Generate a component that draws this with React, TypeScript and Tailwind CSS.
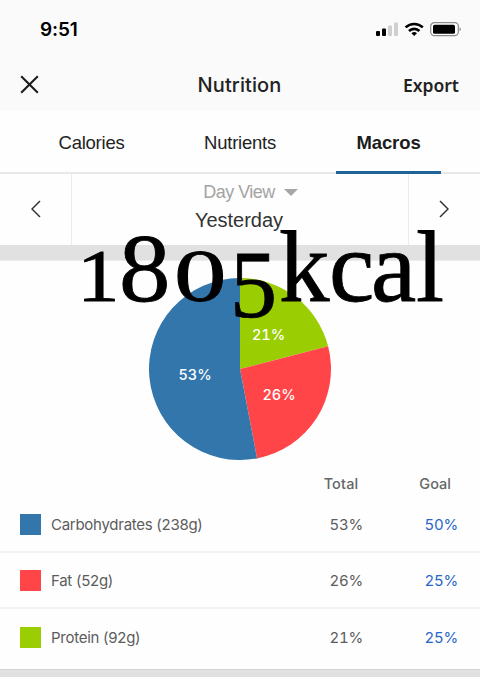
import React, { useState } from 'react';
import clsx from 'clsx';

const TABS = [
  { id: 'calories', label: 'Calories' },
  { id: 'nutrients', label: 'Nutrients' },
  { id: 'macros', label: 'Macros' },
];

const MACROS = [
  { id: 'carbs', label: 'Carbohydrates (238g)', total: 53, goal: 50, swatch: 'bg-[#3276ab]' },
  { id: 'fat', label: 'Fat (52g)', total: 26, goal: 25, swatch: 'bg-[#ff4548]' },
  { id: 'protein', label: 'Protein (92g)', total: 21, goal: 25, swatch: 'bg-[#9bcd03]' },
];

// slices run clockwise from 12 o'clock
const SLICES = [
  { id: 'protein', value: 21, color: '#9bcd03', x: 268.5, y: 340 },
  { id: 'fat', value: 26, color: '#ff4548', x: 279, y: 400 },
  { id: 'carbs', value: 53, color: '#3276ab', x: 195, y: 380 },
];

// old-style figures: the 1 and 0 sit at x-height, the 5 hangs below the baseline
const KCAL_GLYPHS = [
  { char: '1', style: 'w-[42px] text-[74px] scale-x-[1.15]' },
  { char: '8', style: 'w-[55px] text-[97px] scale-x-[1.06]' },
  { char: '0', style: 'w-[56px] text-[74px] scale-x-[1.42]' },
  { char: '5', style: 'w-[49px] text-[96px] translate-y-[16px] scale-x-[0.98]' },
  { char: 'k', style: 'w-[50px] text-[101px]' },
  { char: 'c', style: 'w-[42px] text-[102px]' },
  { char: 'a', style: 'w-[45px] text-[102px]' },
  { char: 'l', style: 'w-[28px] text-[101px]' },
];

function StatusBar() {
  return (
    <div className="flex h-[58px] items-center justify-between pl-10 pr-[18px]">
      <span className="text-[19px] font-semibold leading-none tracking-[-0.1px] text-black">9:51</span>
      <svg width="86" height="16" viewBox="0 0 86 16" className="mt-px">
        <rect x="0" y="9" width="4" height="5" rx="1" fill="#000" />
        <rect x="6" y="6.5" width="4" height="7.5" rx="1" fill="#000" />
        <rect x="12" y="3.5" width="4" height="10.5" rx="1" fill="#cfcfcf" />
        <rect x="18" y="0.5" width="4" height="13.5" rx="1" fill="#cfcfcf" />
        <g fill="none" stroke="#000" strokeWidth="2.6">
          <path d="M29.6 5.4a12.4 12.4 0 0 1 17.2 0" />
          <path d="M33 9a7.4 7.4 0 0 1 10.4 0" />
        </g>
        <path d="M35.4 11.3a4 4 0 0 1 5.6 0L38.2 14z" fill="#000" />
        <rect x="54.7" y="0.7" width="27.6" height="13" rx="3.6" fill="#fff" stroke="#8c8c8c" strokeWidth="1.2" />
        <rect x="57" y="2.8" width="22" height="9" rx="1.6" fill="#000" />
        <path d="M83.6 5.2q2.4 2 0 4z" fill="#777" />
      </svg>
    </div>
  );
}

function MacroPie() {
  const cx = 240;
  const cy = 369;
  const r = 91;
  let start = 0;

  return (
    <svg width="184" height="184" viewBox="148 277 184 184" className="block">
      {SLICES.map(slice => {
        const a0 = (start / 100) * Math.PI * 2;
        start += slice.value;
        const a1 = (start / 100) * Math.PI * 2;
        const large = slice.value > 50 ? 1 : 0;
        const d = `M${cx} ${cy}L${cx + r * Math.sin(a0)} ${cy - r * Math.cos(a0)}A${r} ${r} 0 ${large} 1 ${cx + r * Math.sin(a1)} ${cy - r * Math.cos(a1)}Z`;
        return <path key={slice.id} d={d} fill={slice.color} />;
      })}
      {SLICES.map(slice => (
        <text key={slice.id} x={slice.x} y={slice.y} textAnchor="middle" fill="#fff" className="text-[14.5px] font-medium tabular-nums">
          {slice.value}%
        </text>
      ))}
    </svg>
  );
}

export default function App() {
  const [activeTab, setActiveTab] = useState('macros');

  return (
    <div className="relative flex h-[677px] w-[480px] flex-col overflow-hidden bg-[#fefefe] font-['Inter',sans-serif] text-[#222]">
      <header className="h-[111px] shrink-0 bg-[#fafafa]">
        <StatusBar />
        <div className="grid h-[53px] grid-cols-3 items-center pl-5 pr-[21px]">
          <button aria-label="Close">
            <svg width="19" height="19" viewBox="0 0 19 19" fill="none" stroke="#1c1c1c" strokeWidth="2.1">
              <path d="M1.2 1.2l16.6 16.6M17.8 1.2L1.2 17.8" />
            </svg>
          </button>
          <h1 className="text-center text-[20px] font-medium tracking-[0.1px]">Nutrition</h1>
          <button className="mt-[1px] text-right font-['Noto_Sans',sans-serif] text-[17.5px] font-semibold">Export</button>
        </div>
      </header>

      <nav className="flex h-[63px] shrink-0 justify-between border-b-2 border-[#e9e9e9] px-[39px] font-['Liberation_Sans',sans-serif]">
        {TABS.map(tab => (
          <button
            key={tab.id}
            onClick={() => setActiveTab(tab.id)}
            className={clsx(
              '-mb-[2px] flex h-[63px] w-[105px] items-center justify-center border-b-[3px] pt-[4px] text-[18.5px]',
              activeTab === tab.id
                ? 'border-[#1f6499] font-bold tracking-[-0.1px] text-[#1c1c1c]'
                : 'border-transparent tracking-[-0.25px]'
            )}
          >
            {tab.label}
          </button>
        ))}
      </nav>

      <section className="flex h-[71px] shrink-0 font-['Liberation_Sans',sans-serif]">
        <button aria-label="Previous day" className="flex w-[71px] items-center justify-center pb-[2px]">
          <svg width="10" height="18" viewBox="0 0 10 18" fill="none" stroke="#333" strokeWidth="1.5">
            <path d="M9 1L1 9l8 8" />
          </svg>
        </button>
        <div className="flex flex-1 flex-col items-center border-x border-[#ebebeb]">
          <button className="mt-[6px] flex items-center gap-[9px] pl-[21px] text-[18px] leading-[24px] tracking-[-0.5px] text-[#a3a3a3]">
            Day View
            <svg width="14" height="7" viewBox="0 0 14 7" fill="#a6a6a6">
              <path d="M0 0h14L7 7z" />
            </svg>
          </button>
          <div className="mt-[4px] pr-[2px] text-[20px] leading-[24px] text-[#333]">Yesterday</div>
        </div>
        <button aria-label="Next day" className="flex w-[71px] items-center justify-center pb-[2px] pr-[2px]">
          <svg width="10" height="18" viewBox="0 0 10 18" fill="none" stroke="#333" strokeWidth="1.5">
            <path d="M1 1l8 8-8 8" />
          </svg>
        </button>
      </section>

      <div className="h-[16px] shrink-0 border-b border-[#ececec] bg-[#e1e1e1]" />

      <section className="flex shrink-0 justify-center pt-4">
        <MacroPie />
      </section>

      <section className="flex-1">
        <div className="flex h-[36px] items-center justify-end gap-[61px] pr-[29px] pt-[9px] text-[14.5px] font-medium text-[#666]">
          <span className="tracking-[0.15px]">Total</span>
          <span>Goal</span>
        </div>
        {MACROS.map(macro => (
          <div key={macro.id} className="flex h-[56.2px] items-center border-b-2 border-[#f3f3f3] pl-5 pr-[22px] pt-[1px] text-[15px] tracking-[-0.27px] tabular-nums text-[#5c5c5c] last:border-b-0">
            <div className={clsx('mr-[10px] size-[21px] shrink-0', macro.swatch)} />
            <span className="flex-1 pt-px proportional-nums">{macro.label}</span>
            <span className="w-[80px] pt-px text-right">{macro.total}%</span>
            <span className="w-[95px] pt-px text-right text-[#2966c8]">{macro.goal}%</span>
          </div>
        ))}
      </section>

      <footer className="h-[8px] shrink-0 border-t border-[#d4d4d4] bg-[#e1e1e1]" />

      <div className="pointer-events-none absolute left-[77px] top-[207px] flex items-baseline font-['Liberation_Serif',serif] leading-[120px] text-black [-webkit-text-stroke:0.8px_#000]">
        {KCAL_GLYPHS.map(glyph => (
          <span key={glyph.char} className={clsx('block origin-left', glyph.style)}>
            {glyph.char}
          </span>
        ))}
      </div>
    </div>
  );
}
